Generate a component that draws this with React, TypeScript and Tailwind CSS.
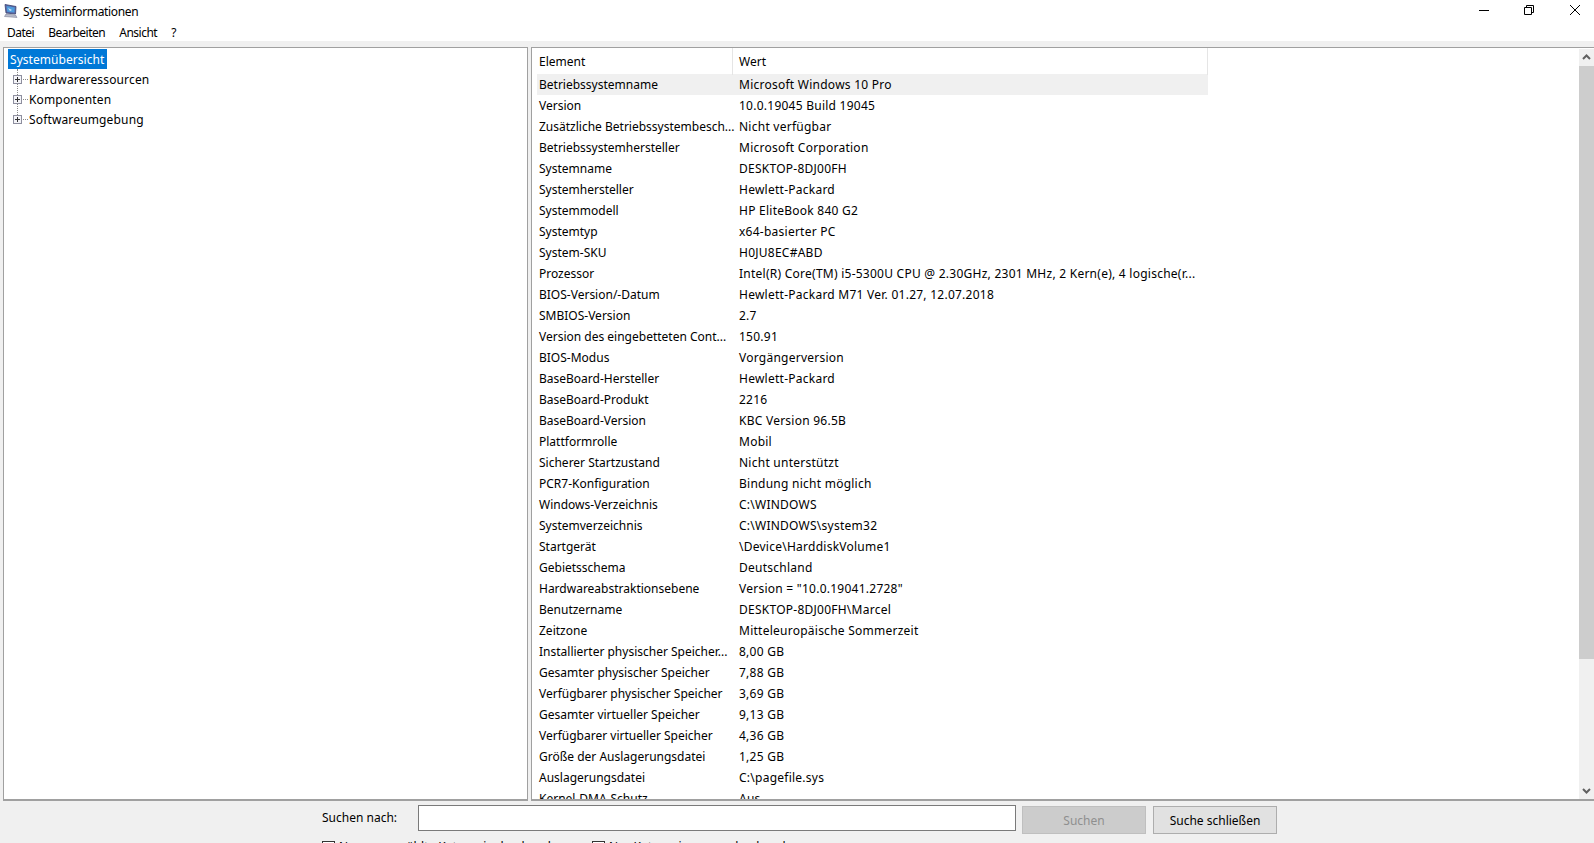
const ROWS = [
  ["Betriebssystemname", "Microsoft Windows 10 Pro"],
  ["Version", "10.0.19045 Build 19045"],
  ["Zusätzliche Betriebssystembesch...", "Nicht verfügbar"],
  ["Betriebssystemhersteller", "Microsoft Corporation"],
  ["Systemname", "DESKTOP-8DJ00FH"],
  ["Systemhersteller", "Hewlett-Packard"],
  ["Systemmodell", "HP EliteBook 840 G2"],
  ["Systemtyp", "x64-basierter PC"],
  ["System-SKU", "H0JU8EC#ABD"],
  ["Prozessor", "Intel(R) Core(TM) i5-5300U CPU @ 2.30GHz, 2301 MHz, 2 Kern(e), 4 logische(r..."],
  ["BIOS-Version/-Datum", "Hewlett-Packard M71 Ver. 01.27, 12.07.2018"],
  ["SMBIOS-Version", "2.7"],
  ["Version des eingebetteten Cont...", "150.91"],
  ["BIOS-Modus", "Vorgängerversion"],
  ["BaseBoard-Hersteller", "Hewlett-Packard"],
  ["BaseBoard-Produkt", "2216"],
  ["BaseBoard-Version", "KBC Version 96.5B"],
  ["Plattformrolle", "Mobil"],
  ["Sicherer Startzustand", "Nicht unterstützt"],
  ["PCR7-Konfiguration", "Bindung nicht möglich"],
  ["Windows-Verzeichnis", "C:\\WINDOWS"],
  ["Systemverzeichnis", "C:\\WINDOWS\\system32"],
  ["Startgerät", "\\Device\\HarddiskVolume1"],
  ["Gebietsschema", "Deutschland"],
  ["Hardwareabstraktionsebene", 'Version = "10.0.19041.2728"'],
  ["Benutzername", "DESKTOP-8DJ00FH\\Marcel"],
  ["Zeitzone", "Mitteleuropäische Sommerzeit"],
  ["Installierter physischer Speicher...", "8,00 GB"],
  ["Gesamter physischer Speicher", "7,88 GB"],
  ["Verfügbarer physischer Speicher", "3,69 GB"],
  ["Gesamter virtueller Speicher", "9,13 GB"],
  ["Verfügbarer virtueller Speicher", "4,36 GB"],
  ["Größe der Auslagerungsdatei", "1,25 GB"],
  ["Auslagerungsdatei", "C:\\pagefile.sys"],
  ["Kernel-DMA-Schutz", "Aus"],
]

const MENU = ["Datei", "Bearbeiten", "Ansicht", "?"]
const TREE = ["Hardwareressourcen", "Komponenten", "Softwareumgebung"]

function AppIcon() {
  return (
    <svg width="16" height="16" viewBox="0 0 16 16" className="shrink-0">
      <path d="M2 1.5 L13 3.5 L12.5 11 L3 10 Z" fill="#5a6aa8" stroke="#39406f" strokeWidth="0.8" />
      <path d="M3.6 3 L11.8 4.5 L11.4 9.6 L4.2 8.8 Z" fill="#4f9bdc" />
      <path d="M5 5 L9 7 L7 8 Z" fill="#cfe6f8" />
      <path d="M3 11 L12.5 12 L14 14.5 L1.5 13.5 Z" fill="#b9bccb" stroke="#6d7188" strokeWidth="0.5" />
    </svg>
  )
}

function PlusBox() {
  return (
    <svg width="9" height="9" viewBox="0 0 9 9" className="shrink-0">
      <rect x="0.5" y="0.5" width="8" height="8" fill="#f4f4f8" stroke="#8e8f9f" />
      <path d="M2 4.5 H7 M4.5 2 V7" stroke="#333" strokeWidth="1" />
    </svg>
  )
}

export default function App() {
  return (
    <div
      className="flex h-[843px] w-[1594px] flex-col overflow-hidden bg-[#f0f0f0] text-[12px] text-black"
      style={{ fontFamily: '"Noto Sans", "Open Sans", sans-serif' }}
    >
      <div className="flex h-[24px] shrink-0 items-center bg-white">
        <div className="ml-[3px] mr-[4px] -mt-[2px]">
          <AppIcon />
        </div>
        <span className="-mt-[1px] tracking-[-0.35px]">Systeminformationen</span>
        <div className="ml-auto -mt-[4px] flex items-center">
          <svg width="12" height="12" viewBox="0 0 12 12" className="mr-[33px]">
            <path d="M1 6.5 H11" stroke="#000" />
          </svg>
          <svg width="12" height="12" viewBox="0 0 12 12" className="mr-[34px]">
            <path d="M1.5 3.5 H8.5 V10.5 H1.5 Z M3.5 3.5 V1.5 H10.5 V8.5 H8.5" stroke="#000" fill="none" />
          </svg>
          <svg width="12" height="12" viewBox="0 0 12 12" className="mr-[13px]">
            <path d="M1 1 L11 11 M11 1 L1 11" stroke="#000" />
          </svg>
        </div>
      </div>

      <div className="flex h-[17px] shrink-0 items-center gap-[14px] bg-white pl-[7px] tracking-[-0.5px]">
        {MENU.map((item) => (
          <span key={item}>{item}</span>
        ))}
      </div>

      <div className="flex h-[760px] shrink-0 gap-[3px] pl-[3px] pt-[6px]">
        <div className="h-full w-[525px] shrink-0 border border-b-2 border-[#a0a0a0] bg-white pl-[4px] pt-[1px]">
          <div className="flex h-[20px] w-[99px] items-center bg-[#0078d7] pl-[2px] pt-[2px] tracking-[0.05px] text-white">Systemübersicht</div>
          <div className="relative ml-[5px]">
            <span className="absolute left-[4px] top-0 h-[50px] border-l border-dotted border-[#8a8a8a]" />
            {TREE.map((item) => (
              <div key={item} className="flex h-[20px] items-center">
                <div className="relative flex items-center">
                  <PlusBox />
                </div>
                <span className="ml-[1px] w-[5px] border-t border-dotted border-[#8a8a8a]" />
                <span className="ml-[1px] whitespace-nowrap pt-[2px] tracking-[0.15px]">{item}</span>
              </div>
            ))}
          </div>
        </div>

        <div className="relative h-full min-w-0 flex-1 overflow-hidden border-y border-b-2 border-l border-[#a0a0a0] bg-white">
          <div className="flex h-[26px] w-[676px] items-center">
            <span className="w-[201px] border-r border-[#e5e5e5] pl-[7px] pt-[1px] leading-[26px]">Element</span>
            <span className="flex-1 border-r border-[#e5e5e5] pl-[6px] pt-[1px] leading-[26px]">Wert</span>
          </div>
          <div className="ml-[5px] w-[671px]">
            {ROWS.map(([name, value], i) => (
              <div key={name} className={`flex h-[21px] items-center ${i === 0 ? "bg-[#f0f0f0]" : ""}`}>
                <span className="w-[200px] shrink-0 overflow-hidden pl-[2px] whitespace-nowrap">{name}</span>
                <span className="whitespace-nowrap pl-[2px] tracking-[0.25px]">{value}</span>
              </div>
            ))}
          </div>
          <div className="absolute top-[1px] right-0 bottom-0 flex w-[15px] flex-col items-center bg-[#f0f0f0]">
            <svg width="15" height="17" viewBox="0 0 15 17" className="shrink-0">
              <path d="M4 10 L7.5 6.5 L11 10" stroke="#606060" strokeWidth="2" fill="none" />
            </svg>
            <div className="h-[593px] w-full bg-[#cdcdcd]" />
            <svg width="15" height="17" viewBox="0 0 15 17" className="mt-auto shrink-0">
              <path d="M4 7 L7.5 10.5 L11 7" stroke="#606060" strokeWidth="2" fill="none" />
            </svg>
          </div>
        </div>
      </div>

      <div className="relative flex shrink-0 items-start pt-[4px]">
        <span className="ml-[322px] mt-[4px] w-[96px]">Suchen nach:</span>
        <div className="h-[26px] w-[598px] border border-[#7a7a7a] bg-white" />
        <div className="ml-[6px] mt-[1px] flex h-[28px] w-[124px] items-center justify-center border border-[#bfbfbf] bg-[#cccccc] pt-[1px] text-[#8f8f8f]">
          Suchen
        </div>
        <div className="ml-[7px] mt-[1px] flex h-[28px] w-[124px] items-center justify-center border border-[#adadad] bg-[#e1e1e1] pt-[1px]">
          Suche schließen
        </div>
        <div className="absolute top-[37px] left-[322px] flex items-center">
          <span className="h-[13px] w-[13px] border border-[#333] bg-white" />
          <span className="ml-[4px] w-[253px] whitespace-nowrap">Nur ausgewählte Kategorie durchsuchen</span>
          <span className="h-[13px] w-[13px] border border-[#333] bg-white" />
          <span className="ml-[4px] whitespace-nowrap">Nur Kategorienamen durchsuchen</span>
        </div>
      </div>
    </div>
  )
}
